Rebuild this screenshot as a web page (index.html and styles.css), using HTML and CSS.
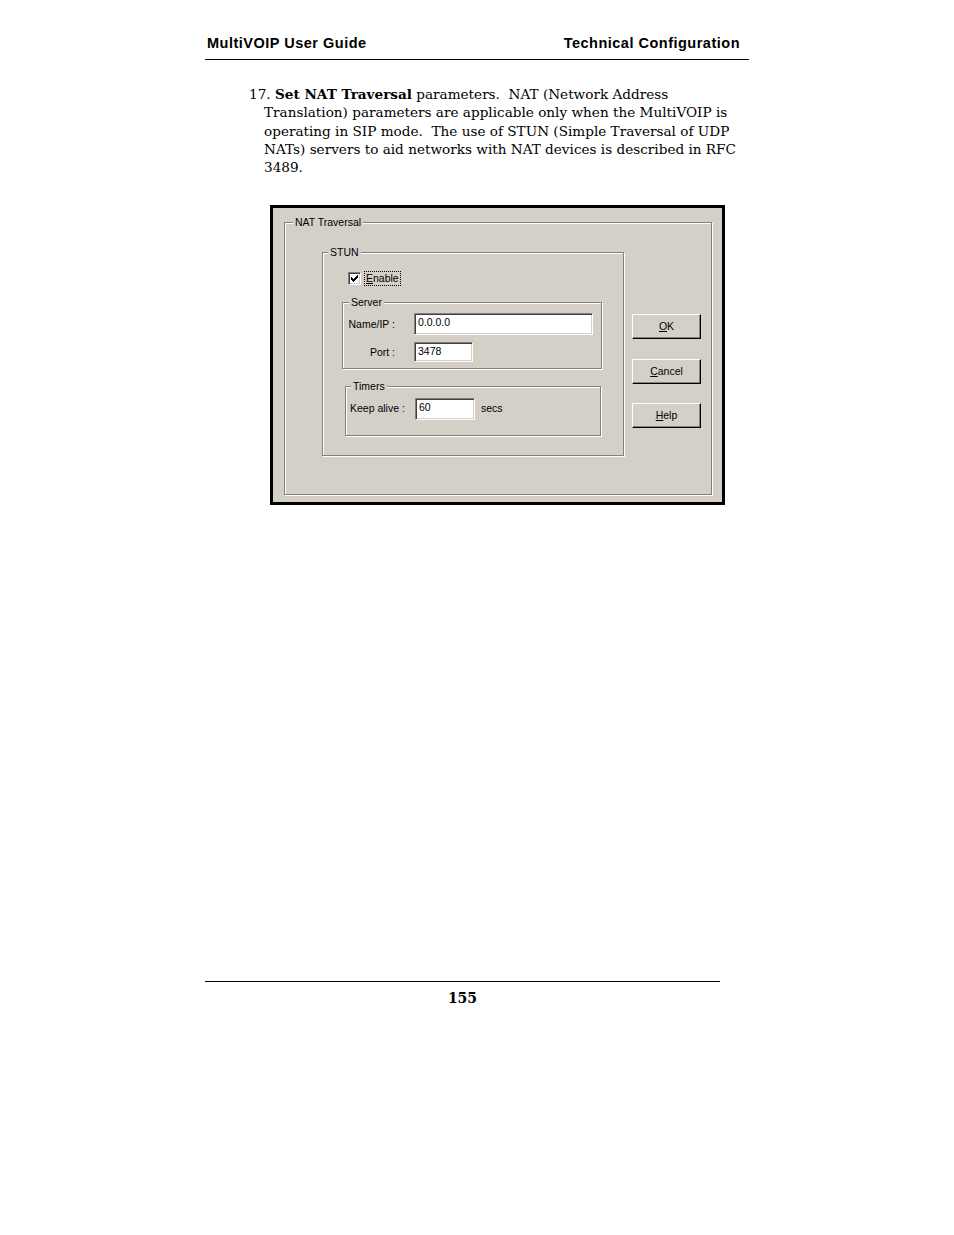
FILE: index.html
```html
<!DOCTYPE html>
<html>
<head>
<meta charset="utf-8">
<link rel="stylesheet" href="styles.css">
</head>
<body>
<div class="page">
  <div class="hdr"><span>MultiVOIP User Guide</span><span>Technical Configuration</span></div>
  <p class="step">17. <b>Set NAT Traversal</b> parameters.&nbsp; NAT (Network Address<br>Translation) parameters are applicable only when the MultiVOIP is<br>operating in SIP mode.&nbsp; The use of STUN (Simple Traversal of UDP<br>NATs) servers to aid networks with NAT devices is described in RFC<br>3489.</p>

  <div class="dialog">
    <div class="group nat">
      <span class="glabel gl-nat">NAT Traversal</span>
      <div class="group stun">
        <span class="glabel gl-stun">STUN</span>
        <div class="chkrow">
          <span class="chk"><svg width="7" height="7" viewBox="0 0 7 7"><path d="M0 2h1v1h1v1h1v-1h1v-1h1v-1h1v-1h1v3h-1v1h-1v1h-1v1h-1v1h-1v-1h-1v-1h-1z" fill="#000"/></svg></span>
          <span class="focus"><u>E</u>nable</span>
        </div>
        <div class="group server">
          <span class="glabel gl-server">Server</span>
          <div class="frow r1"><span class="lbl">Name/IP :</span><span class="field f-name">0.0.0.0</span></div>
          <div class="frow r2"><span class="lbl">Port :</span><span class="field f-port">3478</span></div>
        </div>
        <div class="group timers">
          <span class="glabel gl-timers">Timers</span>
          <div class="trow"><span class="tlbl">Keep alive :</span><span class="field f-keep">60</span><span class="unit">secs</span></div>
        </div>
      </div>
      <div class="buttons">
        <div class="btn"><u>O</u>K</div>
        <div class="btn b2"><u>C</u>ancel</div>
        <div class="btn b3"><u>H</u>elp</div>
      </div>
    </div>
  </div>

  <div class="ftr">155</div>
</div>
</body>
</html>
```

FILE: styles.css
```css
html, body {
  margin: 0;
  padding: 0;
  background: #ffffff;
}

.page {
  width: 954px;
  height: 1235px;
  overflow: hidden;
  color: #000;
}

.hdr {
  margin-left: 205px;
  width: 544px;
  box-sizing: border-box;
  padding: 34px 9px 7px 2px;
  border-bottom: 1px solid #000;
  display: flex;
  justify-content: space-between;
  font-family: "Liberation Sans", Arial, sans-serif;
  font-weight: bold;
  font-size: 14.5px;
  line-height: 18px;
  letter-spacing: 0.5px;
}

.step {
  margin: 25px 0 0 0;
  padding-left: 264px;
  text-indent: -15px;
  white-space: nowrap;
  font-family: "DejaVu Serif", "Liberation Serif", serif;
  font-size: 13.6px;
  line-height: 18.33px;
}

.step b {
  font-weight: bold;
}

/* ---------- dialog ---------- */
.dialog {
  margin: 28px 0 0 270px;
  width: 455px;
  height: 300px;
  box-sizing: border-box;
  border: 3px solid #000;
  background: #d4d0c8;
  padding: 14px 0 0 11px;
  font-family: "Liberation Sans", Arial, sans-serif;
  font-size: 10.5px;
  line-height: 13px;
  color: #000;
}

.group {
  position: relative;
  box-sizing: border-box;
  border: 1px solid #808080;
  box-shadow: inset 1px 1px 0 #ffffff, 1px 1px 0 #ffffff;
}

.glabel {
  position: absolute;
  top: -7px;
  background: #d4d0c8;
  padding: 0 2px;
  white-space: nowrap;
}

.gl-nat { left: 8px; }
.gl-stun { left: 5px; }
.gl-server { left: 6px; }
.gl-timers { left: 5px; }

.nat {
  width: 428px;
  height: 273px;
  display: flex;
  align-items: flex-start;
}

.stun {
  width: 302px;
  height: 204px;
  margin: 29px 0 0 37px;
  display: flex;
  flex-direction: column;
  align-items: flex-start;
}

.chkrow {
  margin: 18px 0 0 25px;
  height: 15px;
  display: flex;
  align-items: center;
}

.chk {
  width: 13px;
  height: 13px;
  box-sizing: border-box;
  background: #fff;
  border: 1px solid;
  border-color: #808080 #ffffff #ffffff #808080;
  box-shadow: inset 1px 1px 0 #404040, inset -1px -1px 0 #d4d0c8;
  display: flex;
  align-items: center;
  justify-content: center;
}

.chk svg {
  display: block;
}

.focus {
  margin-left: 3px;
  padding: 0 1px;
  height: 15px;
  box-sizing: border-box;
  border: 1px dotted #000;
  line-height: 13px;
}

.server {
  width: 260px;
  height: 67px;
  margin: 16px 0 0 19px;
}

.frow {
  display: flex;
  align-items: center;
}

.r1 { margin-top: 10px; }
.r2 { margin-top: 7px; }

.lbl {
  width: 52px;
  text-align: right;
  white-space: nowrap;
  padding-top: 2px;
}

.field {
  box-sizing: border-box;
  background: #fff;
  border: 1px solid;
  border-color: #808080 #ffffff #ffffff #808080;
  box-shadow: inset 1px 1px 0 #404040, inset -1px -1px 0 #d4d0c8;
  padding: 0 0 0 3px;
  display: flex;
  align-items: center;
  white-space: nowrap;
}

.frow .field { margin-left: 19px; }

.f-name { width: 179px; height: 22px; padding-bottom: 2px; }
.f-port { width: 59px; height: 20px; }
.f-keep { width: 60px; height: 22px; padding-bottom: 2px; }

.timers {
  width: 256px;
  height: 50px;
  margin: 17px 0 0 22px;
}

.trow {
  margin: 11px 0 0 4px;
  display: flex;
  align-items: center;
}

.tlbl {
  width: 65px;
  white-space: nowrap;
}

.unit {
  margin-left: 6px;
}

.buttons {
  margin: 91px 0 0 8px;
  display: flex;
  flex-direction: column;
}

.btn {
  width: 69px;
  height: 25px;
  box-sizing: border-box;
  border: 1px solid;
  border-color: #ffffff #000000 #000000 #ffffff;
  box-shadow: inset -1px -1px 0 #808080;
  display: flex;
  align-items: center;
  justify-content: center;
  padding-top: 1px;
}

.b2 { margin-top: 20px; }
.b3 { margin-top: 19px; }

/* ---------- footer ---------- */
.ftr {
  margin: 476px 0 0 205px;
  width: 515px;
  border-top: 1px solid #000;
  padding-top: 6px;
  text-align: center;
  font-family: "DejaVu Serif", "Liberation Serif", serif;
  font-weight: bold;
  font-size: 14px;
  line-height: 20px;
}
```
